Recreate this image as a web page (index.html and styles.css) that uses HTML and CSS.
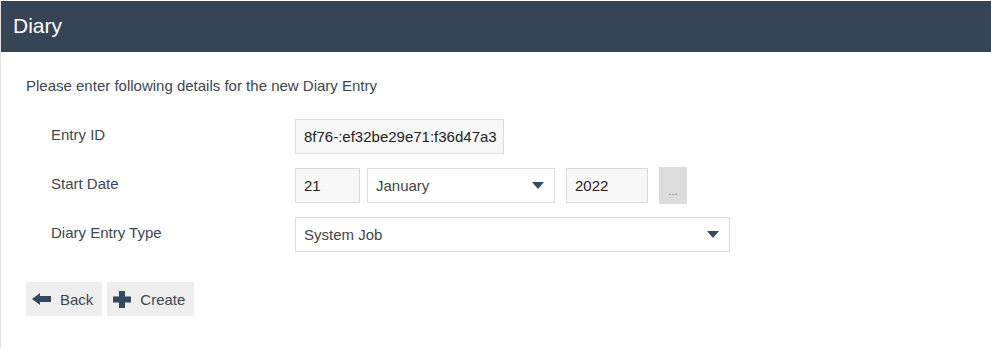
FILE: index.html
```html
<!DOCTYPE html>
<html>
<head>
<meta charset="utf-8">
<link rel="stylesheet" href="styles.css">
</head>
<body>
<div class="page">
  <header class="header"><h1 class="title">Diary</h1></header>
  <main class="content">
    <p class="intro">Please enter following details for the new Diary Entry</p>
    <div class="form">
      <div class="row">
        <div class="label">Entry ID</div>
        <div class="controls">
          <div class="input id-input">8f76-:ef32be29e71:f36d47a3</div>
        </div>
      </div>
      <div class="row">
        <div class="label">Start Date</div>
        <div class="controls date">
          <div class="input day">21</div>
          <div class="select month"><span>January</span><span class="caret"></span></div>
          <div class="input year">2022</div>
          <div class="picker">...</div>
        </div>
      </div>
      <div class="row">
        <div class="label">Diary Entry Type</div>
        <div class="controls">
          <div class="select type"><span>System Job</span><span class="caret"></span></div>
        </div>
      </div>
    </div>
    <div class="actions">
      <button class="btn">
        <svg class="icon" width="19" height="12" viewBox="0 0 19 12"><path d="M0 6 L8 0 L8 3 L19 3 L19 9 L8 9 L8 12 Z" fill="#34495e"/></svg>
        <span>Back</span>
      </button>
      <button class="btn">
        <svg class="icon" width="18" height="17" viewBox="0 0 18 17"><path d="M6 0 H12 V5.5 H18 V11.5 H12 V17 H6 V11.5 H0 V5.5 H6 Z" fill="#34495e"/></svg>
        <span>Create</span>
      </button>
    </div>
  </main>
</div>
</body>
</html>
```
FILE: styles.css
```css
html, body {
  margin: 0;
  padding: 0;
  background: #fff;
}
body {
  font-family: "Liberation Sans", Arial, sans-serif;
  color: #3b4651;
  font-size: 15px;
}
.page {
  width: 990px;
  height: 347px;
  border-left: 1px solid #e3e3e3;
  padding-top: 1px;
}
.header {
  height: 51px;
  background: #364555;
  display: flex;
  align-items: center;
}
.title {
  margin: 0 0 2px 12px;
  font-size: 21px;
  font-weight: normal;
  color: #fff;
}
.content {
  padding: 24px 0 0 25px;
}
.intro {
  margin: 0;
  line-height: 20px;
}
.form {
  margin-top: 16px;
}
.row {
  display: flex;
  align-items: center;
  height: 49px;
}
.label {
  width: 269px;
  padding-left: 25px;
  box-sizing: border-box;
  margin-top: -4px;
}
.controls {
  display: flex;
  align-items: center;
}
.input, .select {
  box-sizing: border-box;
  height: 35px;
  border: 1px solid #dcdcdc;
  display: flex;
  align-items: center;
  padding-left: 8px;
  font-size: 15px;
}
.input {
  background: #f8f8f8;
  color: #222;
}
.select {
  background: #fff;
  color: #444;
  justify-content: space-between;
  padding-right: 10px;
}
.id-input { width: 209px; }
.day { width: 65px; }
.month { width: 188px; margin-left: 7px; }
.year { width: 82px; margin-left: 11px; }
.type { width: 435px; }
.caret {
  width: 0;
  height: 0;
  border-left: 6px solid transparent;
  border-right: 6px solid transparent;
  border-top: 7px solid #34495e;
}
.picker {
  margin-left: 11px;
  width: 28px;
  height: 37px;
  background: #dcdcdc;
  color: #6b7580;
  font-size: 11px;
  display: flex;
  align-items: flex-end;
  justify-content: center;
  padding-bottom: 7px;
  box-sizing: border-box;
}
.actions {
  margin-top: 23px;
  display: flex;
  gap: 5px;
}
.btn {
  height: 34px;
  border: none;
  background: #eeeeee;
  font-family: inherit;
  font-size: 15px;
  color: #3b4651;
  display: flex;
  align-items: center;
  gap: 9px;
  padding: 0 9px 0 6px;
}
.btn .icon { display: block; }
```
